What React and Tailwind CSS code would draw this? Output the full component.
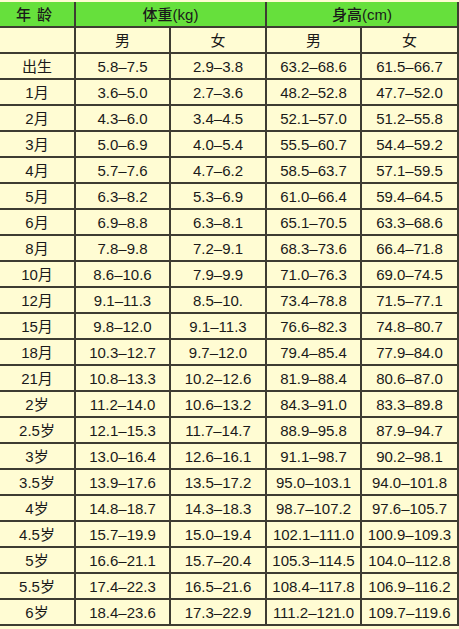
import React from "react";

const rows = [
  ["出生", "5.8–7.5", "2.9–3.8", "63.2–68.6", "61.5–66.7"],
  ["1月", "3.6–5.0", "2.7–3.6", "48.2–52.8", "47.7–52.0"],
  ["2月", "4.3–6.0", "3.4–4.5", "52.1–57.0", "51.2–55.8"],
  ["3月", "5.0–6.9", "4.0–5.4", "55.5–60.7", "54.4–59.2"],
  ["4月", "5.7–7.6", "4.7–6.2", "58.5–63.7", "57.1–59.5"],
  ["5月", "6.3–8.2", "5.3–6.9", "61.0–66.4", "59.4–64.5"],
  ["6月", "6.9–8.8", "6.3–8.1", "65.1–70.5", "63.3–68.6"],
  ["8月", "7.8–9.8", "7.2–9.1", "68.3–73.6", "66.4–71.8"],
  ["10月", "8.6–10.6", "7.9–9.9", "71.0–76.3", "69.0–74.5"],
  ["12月", "9.1–11.3", "8.5–10.", "73.4–78.8", "71.5–77.1"],
  ["15月", "9.8–12.0", "9.1–11.3", "76.6–82.3", "74.8–80.7"],
  ["18月", "10.3–12.7", "9.7–12.0", "79.4–85.4", "77.9–84.0"],
  ["21月", "10.8–13.3", "10.2–12.6", "81.9–88.4", "80.6–87.0"],
  ["2岁", "11.2–14.0", "10.6–13.2", "84.3–91.0", "83.3–89.8"],
  ["2.5岁", "12.1–15.3", "11.7–14.7", "88.9–95.8", "87.9–94.7"],
  ["3岁", "13.0–16.4", "12.6–16.1", "91.1–98.7", "90.2–98.1"],
  ["3.5岁", "13.9–17.6", "13.5–17.2", "95.0–103.1", "94.0–101.8"],
  ["4岁", "14.8–18.7", "14.3–18.3", "98.7–107.2", "97.6–105.7"],
  ["4.5岁", "15.7–19.9", "15.0–19.4", "102.1–111.0", "100.9–109.3"],
  ["5岁", "16.6–21.1", "15.7–20.4", "105.3–114.5", "104.0–112.8"],
  ["5.5岁", "17.4–22.3", "16.5–21.6", "108.4–117.8", "106.9–116.2"],
  ["6岁", "18.4–23.6", "17.3–22.9", "111.2–121.0", "109.7–119.6"],
];

const cell = "border-r-2 border-b-2 border-[#3e3c32] text-center align-middle p-0";

export default function App() {
  return (
    <div
      className="w-[459px] h-[629px] overflow-hidden bg-[#fffcd3] pt-[2px] text-[#1a1a1a]"
      style={{ fontFamily: '"Liberation Sans", "Noto Sans CJK SC", sans-serif' }}
    >
      <table className="table-fixed border-collapse w-[458px] text-[15px] leading-none">
        <colgroup>
          <col className="w-[75px]" />
          <col className="w-[95px]" />
          <col className="w-[96px]" />
          <col className="w-[95px]" />
          <col className="w-[97px]" />
        </colgroup>
        <tbody>
          <tr className="h-[25px] bg-[#66e03c]">
            <td className={`${cell} font-medium tracking-[6px]`}>年龄</td>
            <td className={`${cell} font-medium`} colSpan={2}>体重(kg)</td>
            <td className={`${cell} font-medium`} colSpan={2}>身高(cm)</td>
          </tr>
          <tr className="h-[26px]">
            <td className={cell}></td>
            <td className={cell}>男</td>
            <td className={cell}>女</td>
            <td className={cell}>男</td>
            <td className={cell}>女</td>
          </tr>
          {rows.map((r) => (
            <tr key={r[0]} className="h-[26px]">
              {r.map((v, i) => (
                <td key={i} className={cell}>
                  {v}
                </td>
              ))}
            </tr>
          ))}
        </tbody>
      </table>
    </div>
  );
}
